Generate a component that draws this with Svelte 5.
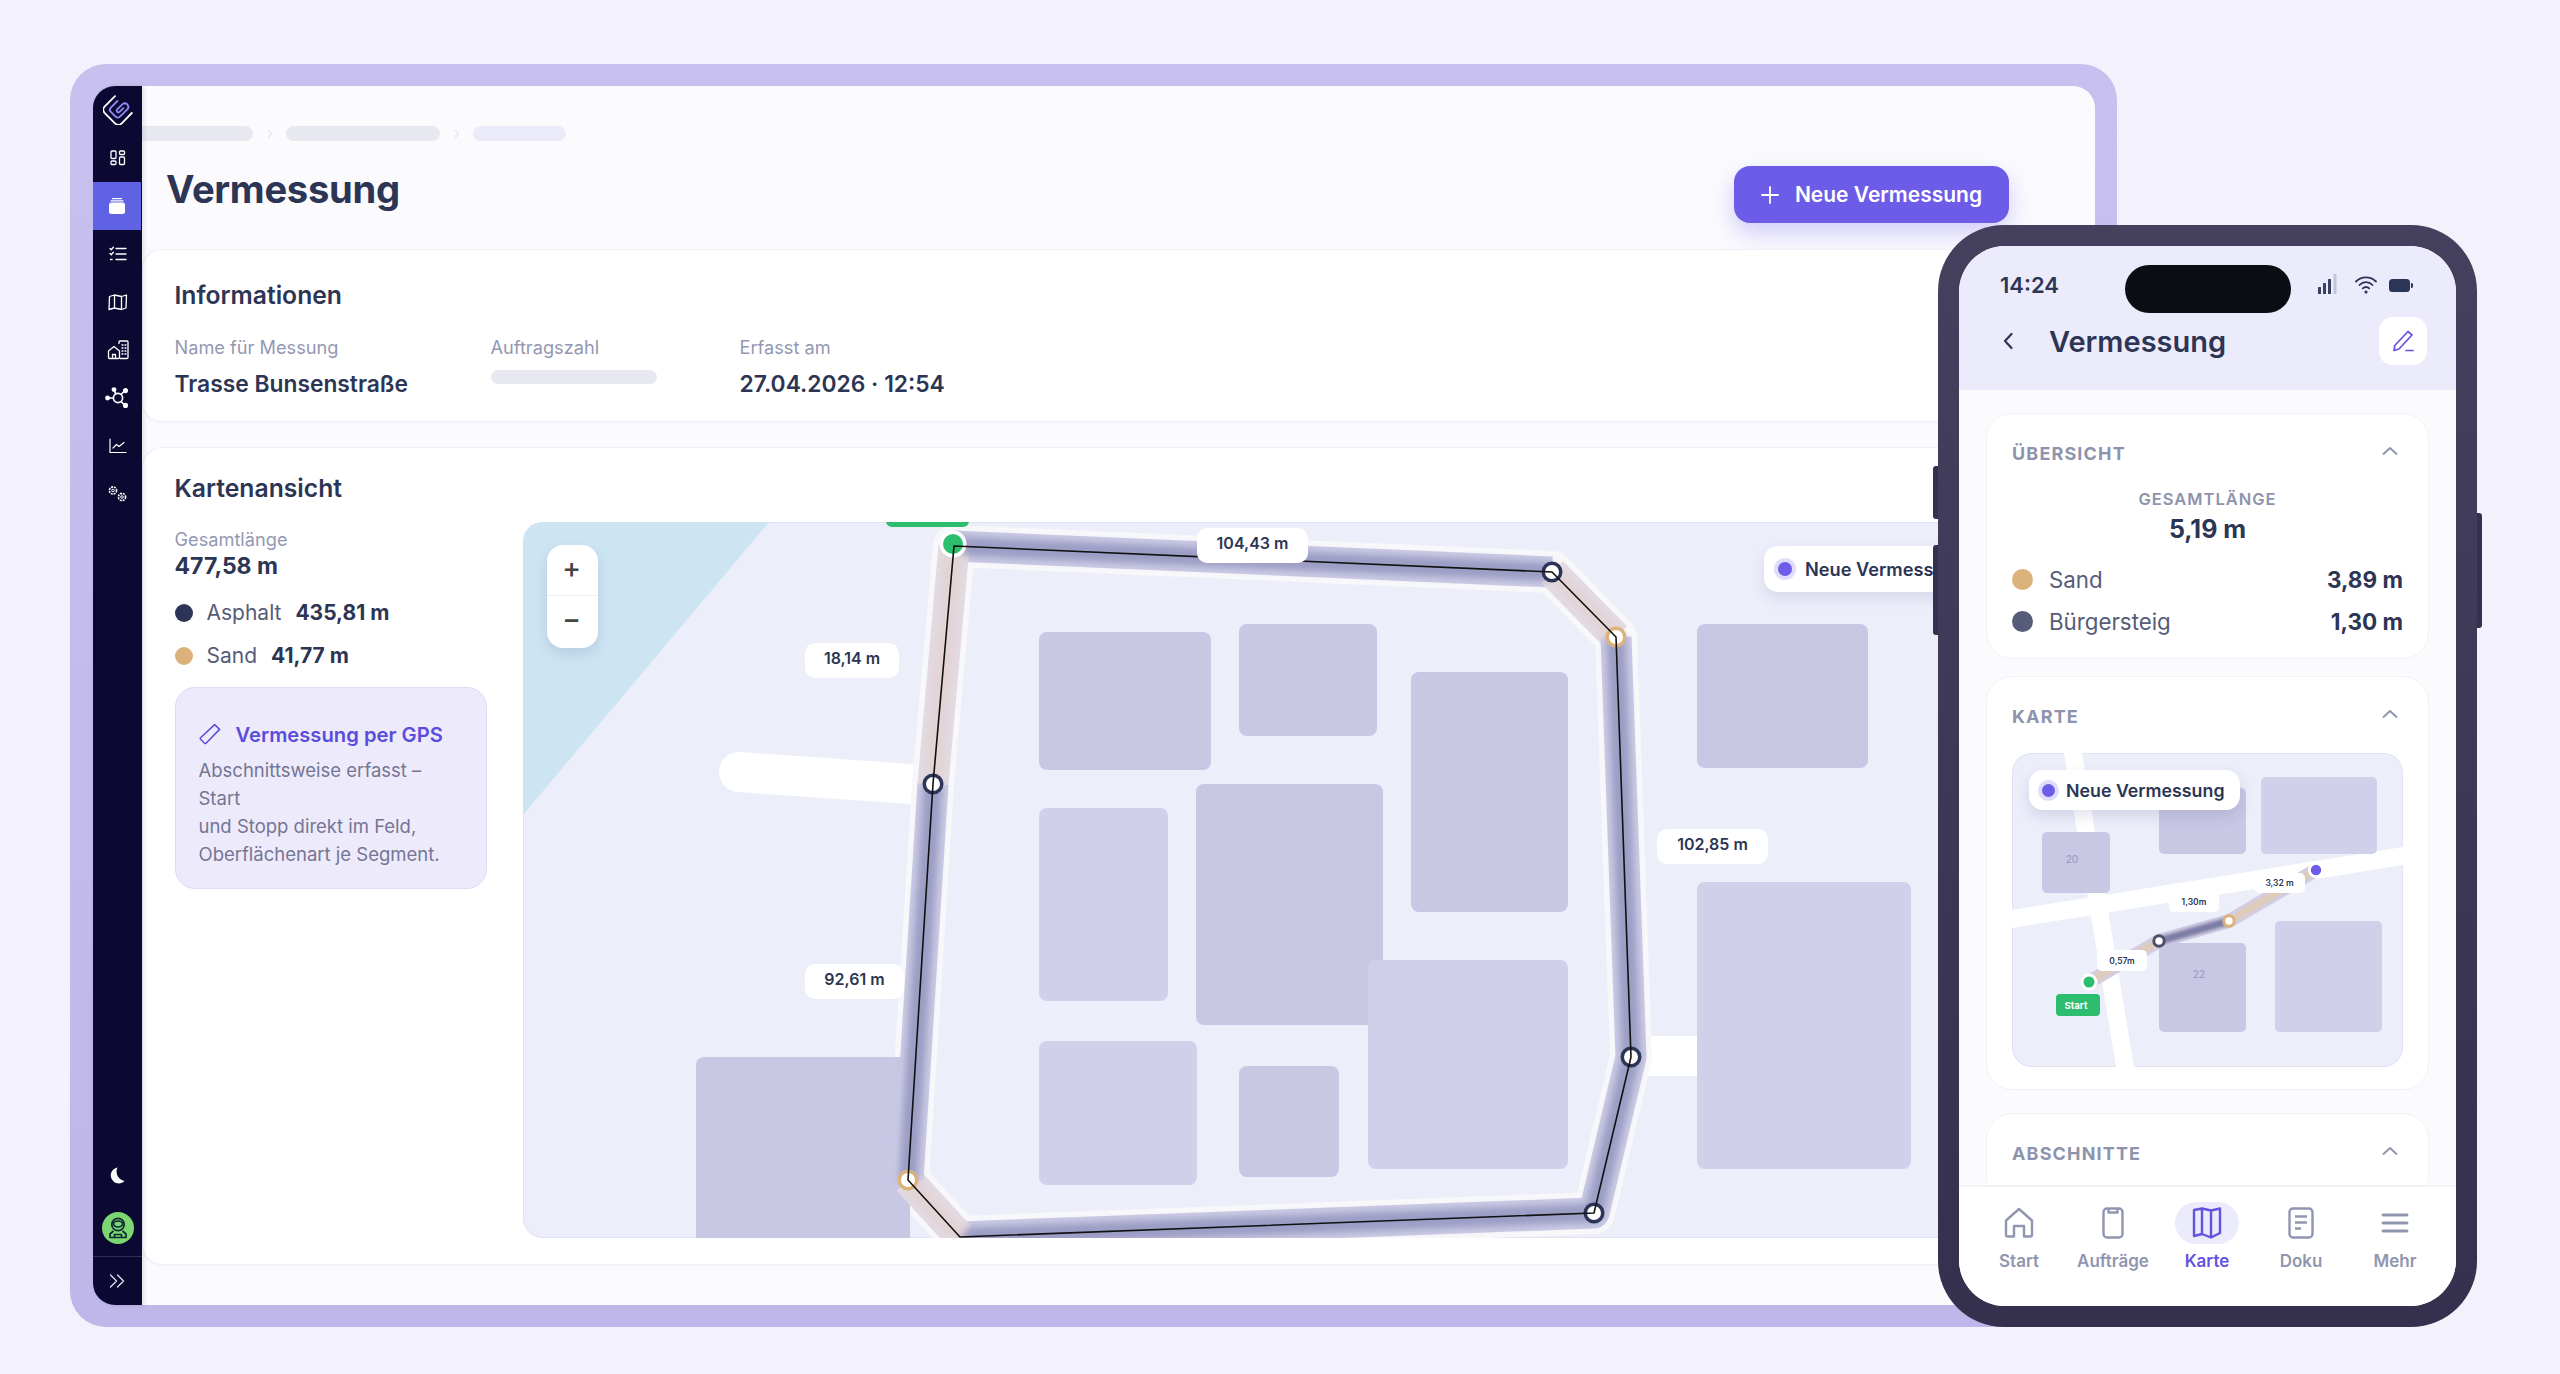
<script>
  const buildings = [
    { x: 1039, y: 632, w: 172, h: 138, c: 'a' },
    { x: 1239, y: 624, w: 138, h: 112, c: 'a' },
    { x: 1411, y: 672, w: 157, h: 240, c: 'a' },
    { x: 1697, y: 624, w: 171, h: 144, c: 'a' },
    { x: 1039, y: 808, w: 129, h: 193, c: 'b' },
    { x: 1196, y: 784, w: 187, h: 241, c: 'a' },
    { x: 1039, y: 1041, w: 158, h: 144, c: 'b' },
    { x: 1239, y: 1066, w: 100, h: 111, c: 'a' },
    { x: 1368, y: 960, w: 200, h: 209, c: 'b' },
    { x: 1697, y: 882, w: 214, h: 287, c: 'b' },
    { x: 696, y: 1057, w: 214, h: 200, c: 'a' }
  ];
  const route = [
    { d: 'M954 546 L1552 572', sand: false },
    { d: 'M1552 572 L1616 637', sand: true },
    { d: 'M1616 637 L1631 1057 L1594 1213 L960 1237', sand: false },
    { d: 'M960 1237 L908 1180', sand: true },
    { d: 'M908 1180 L933 784', sand: false },
    { d: 'M933 784 L954 546', sand: true }
  ];
  const outline = 'M954 546 L1552 572 L1616 637 L1631 1057 L1594 1213 L960 1237 L908 1180 L933 784 Z';
  const nodes = [
    { x: 933, y: 784, sand: false },
    { x: 1552, y: 572, sand: false },
    { x: 1616, y: 637, sand: true },
    { x: 1631, y: 1057, sand: false },
    { x: 1594, y: 1213, sand: false },
    { x: 908, y: 1180, sand: true }
  ];
  const chips = [
    { x: 1197, y: 528, w: 111, h: 35, t: '104,43 m' },
    { x: 805, y: 643, w: 94, h: 35, t: '18,14 m' },
    { x: 805, y: 964, w: 99, h: 35, t: '92,61 m' },
    { x: 1657, y: 829, w: 111, h: 35, t: '102,85 m' }
  ];
  const miniChips = [
    { x: 2097, y: 949, w: 50, h: 21, t: '0,57m' },
    { x: 2169, y: 891, w: 50, h: 20, t: '1,30m' },
    { x: 2254, y: 872, w: 51, h: 20, t: '3,32 m' }
  ];
</script>

<div class="frame">
  <aside class="rail">
    <div class="rail-item logo">
      <svg width="30" height="30" viewBox="1 2 25 25" fill="none" stroke-linecap="round" stroke-linejoin="round">
        <path d="M11 2 L2.5 10.5 a4 4 0 0 0 0 5.6 L11 24.6 a4 4 0 0 0 5.6 0 L25 16" stroke="#fff" stroke-width="1.5" transform="translate(0 1)" />
        <path d="M13 7 L7.5 12.5 a2.6 2.6 0 0 0 0 3.6 L11.5 20 a2.6 2.6 0 0 0 3.6 0 L21.5 13.8 a3 3 0 0 0 -4.2 -4.2 L12.8 14 a1.4 1.4 0 0 0 2 2 L18 13" stroke="#8f8cf5" stroke-width="1.5" />
      </svg>
    </div>
    <div class="rail-item">
      <svg width="16" height="16" viewBox="0 0 16 16" fill="none" stroke="#fff" stroke-width="1.3"><rect x="1" y="1" width="5" height="7.5" rx="1"/><rect x="9.5" y="1" width="5" height="3.5" rx="1"/><rect x="1" y="11" width="5" height="3.5" rx="1"/><rect x="9.5" y="7" width="5" height="7.5" rx="1"/></svg>
    </div>
    <div class="rail-item active">
      <svg width="18" height="18" viewBox="0 0 18 18" fill="#fff"><rect x="1" y="5.5" width="16" height="11.5" rx="2.5"/><rect x="2.5" y="3.2" width="13" height="1.3" rx=".6"/><rect x="4" y="1" width="10" height="1.3" rx=".6"/></svg>
    </div>
    <div class="rail-item">
      <svg width="18" height="16" viewBox="0 0 18 16" fill="none" stroke="#fff" stroke-width="1.3" stroke-linecap="round"><path d="M1 2.5 l1.2 1.2 L4.4 1.2 M1 7.5 l1.2 1.2 L4.4 6.2"/><path d="M7 2.5h10M7 8h10M7 13.5h10M1.5 13.5h1.6"/></svg>
    </div>
    <div class="rail-item">
      <svg width="20" height="18" viewBox="0 0 20 18" fill="none" stroke="#fff" stroke-width="1.3" stroke-linejoin="round"><path d="M1.5 3.5 L6.5 2 L13.5 3.5 L18.5 2 L18 15 L13.5 16.5 L6.5 15 L1 16.5 Z M6.5 2V15 M13.5 3.5V16.5"/></svg>
    </div>
    <div class="rail-item">
      <svg width="22" height="20" viewBox="0 0 22 20" fill="none" stroke="#fff" stroke-width="1.3" stroke-linejoin="round"><path d="M12 4 V2 a1 1 0 0 1 1 -1 h7 a1 1 0 0 1 1 1 V17.5 a1 1 0 0 1 -1 1 H13"/><path d="M1.5 11 L7 6.5 L12.5 11 V17.5 a1 1 0 0 1 -1 1 H2.5 a1 1 0 0 1 -1 -1 Z M5.5 18.5 V14.5 H8.5 V18.5"/><path d="M15 5h1M18 5h1M15 8h1M18 8h1M15 11h1M18 11h1M15 14h1M18 14h1" stroke-linecap="round"/></svg>
    </div>
    <div class="rail-item">
      <svg width="26" height="22" viewBox="0 0 26 22" fill="none" stroke="#fff" stroke-width="1.7"><circle cx="13" cy="11" r="4.6"/><path d="M9 11H4M16 7.5l3-3M16 14.5l3 3M11 7l-1.6-3"/><circle cx="2.6" cy="11" r="1.6" fill="#fff"/><circle cx="20.5" cy="3.6" r="1.7" fill="#fff"/><circle cx="20.5" cy="18.4" r="1.7" fill="#fff"/><circle cx="9" cy="2.6" r="1.6" fill="#fff"/></svg>
    </div>
    <div class="rail-item">
      <svg width="18" height="16" viewBox="0 0 18 16" fill="none" stroke="#fff" stroke-width="1.2" stroke-linejoin="round" stroke-linecap="round"><path d="M1 1V14.5H17"/><path d="M4 10 L7.5 6.5 L10 8.5 L15 4.5"/></svg>
    </div>
    <div class="rail-item">
      <svg width="21" height="18" viewBox="0 0 21 18" fill="none" stroke="#fff"><circle cx="6" cy="5.5" r="3.6" stroke-width="1.6" stroke-dasharray="2 .9"/><circle cx="6" cy="5.5" r="1.3" stroke-width="1"/><circle cx="15" cy="12" r="3.6" stroke-width="1.6" stroke-dasharray="2 .9"/><circle cx="15" cy="12" r="1.3" stroke-width="1"/></svg>
    </div>
    <div class="rail-spacer"></div>
    <div class="rail-item moon">
      <svg width="16" height="17" viewBox="0 0 16 17" fill="#fff"><path d="M8.5 .5 A8 8 0 1 0 15.5 14 A9.5 9.5 0 0 1 8.5 .5 Z"/></svg>
    </div>
    <div class="rail-item avatar-slot">
      <div class="avatar">
        <svg width="22" height="24" viewBox="0 0 22 24" fill="none" stroke="#0c2a33" stroke-width="1.7" stroke-linejoin="round"><circle cx="11" cy="8.5" r="6.2"/><path d="M6.5 8 a4.5 3 0 0 1 9 0 a4.5 3 0 0 1 -9 0Z"/><path d="M6.5 15 L3 18 V21.5 H19 V18 L15.5 15"/><path d="M7.5 21.5 V18.5 H14.5 V21.5"/></svg>
      </div>
    </div>
    <div class="rail-foot">
      <svg width="16" height="14" viewBox="0 0 16 14" fill="none" stroke="#dcdcec" stroke-width="1.4" stroke-linecap="round" stroke-linejoin="round"><path d="M1.5 1 L7.5 7 L1.5 13M8.5 1 L14.5 7 L8.5 13"/></svg>
    </div>
  </aside>

  <main class="main">
    <div class="crumbs">
      <span class="crumb c1"></span>
      <svg class="sep" width="6" height="10" viewBox="0 0 6 10" fill="none" stroke="#d6d8e4" stroke-width="1"><path d="M1 1l3.5 4L1 9"/></svg>
      <span class="crumb c2"></span>
      <svg class="sep" width="6" height="10" viewBox="0 0 6 10" fill="none" stroke="#d6d8e4" stroke-width="1"><path d="M1 1l3.5 4L1 9"/></svg>
      <span class="crumb c3"></span>
    </div>
    <header class="head">
      <h1>Vermessung</h1>
      <button class="primary">
        <svg width="18" height="18" viewBox="0 0 18 18" fill="none" stroke="#fff" stroke-width="1.8" stroke-linecap="round"><path d="M9 1v16M1 9h16"/></svg>
        Neue Vermessung
      </button>
    </header>

    <section class="card info">
      <h2>Informationen</h2>
      <div class="fields">
        <div>
          <div class="label">Name für Messung</div>
          <div class="value">Trasse Bunsenstraße</div>
        </div>
        <div>
          <div class="label">Auftragszahl</div>
          <div class="value"><span class="ghost"></span></div>
        </div>
        <div>
          <div class="label">Erfasst am</div>
          <div class="value">27.04.2026 · 12:54</div>
        </div>
      </div>
    </section>

    <section class="card kart">
      <h2>Kartenansicht</h2>
      <div class="kart-body">
        <div class="side">
          <div class="label">Gesamtlänge</div>
          <div class="total">477,58 m</div>
          <div class="legend first"><i class="dot asphalt"></i><span>Asphalt</span><b>435,81 m</b></div>
          <div class="legend"><i class="dot sand"></i><span>Sand</span><b>41,77 m</b></div>
          <div class="gps">
            <div class="gps-title">
              <svg width="22" height="22" viewBox="0 0 22 22" fill="none" stroke="#5b4ddb" stroke-width="1.5" stroke-linejoin="round"><path d="M15.6 1.6 L20.6 6.4 L7 20.2 a1 1 0 0 1 -1.4 0 L1.6 16.2 a1 1 0 0 1 0 -1.4 Z"/></svg>
              Vermessung per GPS
            </div>
            <p>Abschnittsweise erfasst –<br />Start<br />und Stopp direkt im Feld,<br />Oberflächenart je Segment.</p>
          </div>
        </div>

        <div class="map">
          <svg class="map-svg" width="1537" height="716" viewBox="523 522 1537 716">
            <defs>
              <filter id="soft" x="-20%" y="-20%" width="140%" height="140%"><feGaussianBlur stdDeviation="3.5" /></filter>
            </defs>
            <polygon points="523,522 769,522 523,815" class="water" />
            <path d="M739 772 L925 785" class="stub" />
            <rect x="1640" y="1036" width="60" height="40" fill="#fff" />
            <path d={outline} fill="none" stroke="#f8f8fb" stroke-width="42" stroke-linejoin="round" />
            {#each buildings as b}
              <rect x={b.x} y={b.y} width={b.w} height={b.h} rx="8" class={b.c === 'a' ? 'bld-a' : 'bld-b'} />
            {/each}
            {#each route as r}
              <path d={r.d} fill="none" stroke={r.sand ? '#e2dae4' : '#cbcbe5'} stroke-width="31" stroke-linejoin="round" />
            {/each}
            <g filter="url(#soft)">
              {#each route as r}
                <path d={r.d} fill="none" stroke={r.sand ? '#e3d4d6' : '#9c9dc5'} stroke-width="19" stroke-linejoin="round" />
              {/each}
            </g>
            <rect x="886" y="512" width="83" height="15" rx="6" fill="#2dbd6e" />
            <circle cx="953" cy="544" r="13.5" fill="#fff" />
            <circle cx="953" cy="544" r="10" fill="#2dbd6e" />
            {#each nodes as n}
              <circle cx={n.x} cy={n.y} r="8.75" fill="#fff" stroke={n.sand ? '#dcb27c' : '#2d3557'} stroke-width="3.5" />
            {/each}
            <path d={outline} fill="none" stroke="#111" stroke-width="1.6" stroke-linejoin="miter" />
            {#each chips as c}
              <rect x={c.x} y={c.y} width={c.w} height={c.h} rx="10" fill="#fff" />
              <text x={c.x + c.w / 2} y={c.y + c.h / 2 + 3.5} class="chip-text">{c.t}</text>
            {/each}
          </svg>
          <div class="zoom"><span>+</span><span>−</span></div>
          <div class="legend-chip"><i></i>Neue Vermessung</div>
        </div>
      </div>
    </section>
  </main>
</div>

<div class="phone">
  <span class="btn-l one"></span><span class="btn-l two"></span><span class="btn-r"></span>
  <div class="screen">
    <div class="p-head">
      <div class="status">
        <span class="time">14:24</span>
        <span class="island"></span>
        <span class="s-icons">
          <svg class="sig" width="19" height="20" viewBox="0 0 19 20" fill="#3a4160"><rect x="0" y="13" width="3" height="7" rx=".5"/><rect x="5" y="9" width="3" height="11" rx=".5"/><rect x="10" y="5" width="3" height="15" rx=".5"/><rect x="15.5" y="0" width="3" height="20" rx=".5" fill="#c4c5d8"/></svg>
          <svg width="22" height="18" viewBox="0 0 22 18" fill="none" stroke="#2d3557" stroke-width="1.8" stroke-linecap="round"><path d="M1 5.5 a14 14 0 0 1 20 0 M4.5 9 a9 9 0 0 1 13 0 M7.8 12.4 a4.4 4.4 0 0 1 6.4 0"/><circle cx="11" cy="16" r="1.6" fill="#2d3557" stroke="none"/></svg>
          <svg width="24" height="13" viewBox="0 0 24 13"><rect x="0" y="0" width="21" height="13" rx="3.5" fill="#2d3557"/><path d="M22 4v5a2.5 2.5 0 0 0 0-5Z" fill="#2d3557"/></svg>
        </span>
      </div>
      <div class="p-title">
        <svg width="12" height="18" viewBox="0 0 12 18" fill="none" stroke="#2d3557" stroke-width="2.2" stroke-linecap="round" stroke-linejoin="round"><path d="M9.5 2 L3 9 L9.5 16"/></svg>
        <span>Vermessung</span>
        <button class="edit" aria-label="Bearbeiten">
          <svg width="24" height="24" viewBox="0 0 24 24" fill="none" stroke="#6353e0" stroke-width="1.7" stroke-linecap="round" stroke-linejoin="round"><path d="M17 2.5 L21 6 L8 20 L3 21.5 L3.8 16.5 Z"/><path d="M15 21.5h7"/></svg>
        </button>
      </div>
    </div>
    <div class="p-scroll">
      <section class="p-card c-a">
        <div class="p-h"><span>ÜBERSICHT</span><svg width="16" height="10" viewBox="0 0 16 10" fill="none" stroke="#8e93ad" stroke-width="1.8" stroke-linecap="round" stroke-linejoin="round"><path d="M1.5 8 L8 2 L14.5 8"/></svg></div>
        <div class="p-sub">GESAMTLÄNGE</div>
        <div class="p-total">5,19 m</div>
        <div class="p-rows">
          <div class="p-row"><i class="p-dot sand"></i><span>Sand</span><b>3,89 m</b></div>
          <div class="p-row"><i class="p-dot walk"></i><span>Bürgersteig</span><b>1,30 m</b></div>
        </div>
      </section>
      <section class="p-card c-b">
        <div class="p-h"><span>KARTE</span><svg width="16" height="10" viewBox="0 0 16 10" fill="none" stroke="#8e93ad" stroke-width="1.8" stroke-linecap="round" stroke-linejoin="round"><path d="M1.5 8 L8 2 L14.5 8"/></svg></div>
        <div class="p-map">
          <svg width="391" height="314" viewBox="2012 752 391 314">
            <defs><filter id="mini" x="-20%" y="-60%" width="140%" height="220%"><feGaussianBlur stdDeviation="1.8" /></filter></defs>
            <polygon points="2064,752 2082,752 2134,1066 2116,1066" fill="#fff" />
            <polygon points="2012,909 2403,846 2403,864 2012,927" fill="#fff" />
            <rect x="2159" y="787" width="87" height="66" rx="5" class="bld-a" />
            <rect x="2261" y="776" width="116" height="77" rx="5" class="bld-b" />
            <rect x="2042" y="831" width="68" height="61" rx="5" class="bld-a" />
            <rect x="2159" y="942" width="87" height="89" rx="5" class="bld-a" />
            <rect x="2275" y="920" width="107" height="111" rx="5" class="bld-b" />
            <text x="2072" y="862" class="bld-num">20</text>
            <text x="2199" y="977" class="bld-num">22</text>
            <path d="M2089 981 L2159 940 L2229 920 L2316 869" fill="none" stroke="#d3cde4" stroke-width="14" stroke-linejoin="round" />
            <g filter="url(#mini)">
              <path d="M2089 981 L2159 940" fill="none" stroke="#dfcbb6" stroke-width="7" />
              <path d="M2159 940 L2229 920" fill="none" stroke="#7d7ea6" stroke-width="8" />
              <path d="M2229 920 L2316 869" fill="none" stroke="#dfcbb6" stroke-width="7" />
            </g>
            {#each miniChips as c}
              <rect x={c.x} y={c.y} width={c.w} height={c.h} rx="5" fill="#fff" />
              <text x={c.x + c.w / 2} y={c.y + c.h / 2 + 3} class="mini-text">{c.t}</text>
            {/each}
            <circle cx="2159" cy="940" r="5.2" fill="#fff" stroke="#4a4f6b" stroke-width="3" />
            <circle cx="2229" cy="920" r="5.2" fill="#fff" stroke="#dcb27c" stroke-width="3" />
            <circle cx="2089" cy="981" r="8.5" fill="#fff" />
            <circle cx="2089" cy="981" r="5.5" fill="#2dbd6e" />
            <circle cx="2316" cy="869" r="8" fill="#fff" />
            <circle cx="2316" cy="869" r="5.2" fill="#6c5ce7" />
            <rect x="2056" y="993" width="44" height="22" rx="4" fill="#2dbd6e" />
            <text x="2076" y="1008" class="start-text">Start</text>
          </svg>
          <div class="p-chip"><i></i>Neue Vermessung</div>
        </div>
      </section>
      <section class="p-card c-c">
        <div class="p-h"><span>ABSCHNITTE</span><svg width="16" height="10" viewBox="0 0 16 10" fill="none" stroke="#8e93ad" stroke-width="1.8" stroke-linecap="round" stroke-linejoin="round"><path d="M1.5 8 L8 2 L14.5 8"/></svg></div>
      </section>
    </div>
    <nav class="tabs">
      <div class="tab">
        <span class="t-icon"><svg width="30" height="32" viewBox="0 0 30 32" fill="none" stroke="#9096b0" stroke-width="2.4" stroke-linejoin="round"><path d="M15 2 L28 13.5 V28 a1.5 1.5 0 0 1 -1.5 1.5 H20 V19 H10 V29.5 H3.5 A1.5 1.5 0 0 1 2 28 V13.5 Z"/></svg></span>
        Start
      </div>
      <div class="tab">
        <span class="t-icon"><svg width="22" height="32" viewBox="0 0 22 32" fill="none" stroke="#9096b0" stroke-width="2.4" stroke-linejoin="round"><rect x="1.5" y="1.5" width="19" height="29" rx="3.5"/><path d="M6.5 1.5 V5.5 H15.5 V1.5"/></svg></span>
        Aufträge
      </div>
      <div class="tab on">
        <span class="t-icon"><svg width="30" height="32" viewBox="0 0 30 32" fill="none" stroke="#6353e0" stroke-width="2.4" stroke-linejoin="round"><path d="M2 3 L10 1.5 L19 3.5 L28 1.5 V26 L19 30.5 L10 27 L2 29 Z M10 1.5 V27 M19 3.5 V30.5"/></svg></span>
        Karte
      </div>
      <div class="tab">
        <span class="t-icon"><svg width="26" height="32" viewBox="0 0 26 32" fill="none" stroke="#9096b0" stroke-width="2.4" stroke-linejoin="round"><rect x="1.5" y="1.5" width="23" height="29" rx="3.5"/><path d="M7 9.5h12M7 15.5h12M7 21.5h6"/></svg></span>
        Doku
      </div>
      <div class="tab">
        <span class="t-icon"><svg width="28" height="22" viewBox="0 0 28 22" fill="none" stroke="#9096b0" stroke-width="2.8" stroke-linecap="round"><path d="M2 3h24M2 11h24M2 19h24"/></svg></span>
        Mehr
      </div>
    </nav>
  </div>
</div>

<style>
  :global(body) {
    margin: 0;
    background: #f3f2fc;
    font-family: Inter, "Noto Sans", sans-serif;
    color: #2c3554;
  }
  :global(#app) {
    position: relative;
    width: 2560px;
    height: 1374px;
    overflow: hidden;
  }
  .frame {
    position: absolute;
    left: 70px;
    top: 64px;
    width: 2047px;
    height: 1263px;
    box-sizing: border-box;
    padding: 22px 22px 22px 23px;
    border-radius: 36px;
    background: linear-gradient(180deg, #c8c0ee, #bfb6e9);
    display: flex;
  }
  .rail {
    width: 49px;
    flex: none;
    background: #0b0832;
    border-radius: 22px 0 0 22px;
    display: flex;
    flex-direction: column;
    align-items: stretch;
    box-shadow: 2px 0 4px rgba(30, 30, 60, .12);
    position: relative;
    z-index: 1;
  }
  .rail-item {
    height: 48px;
    display: flex;
    align-items: center;
    justify-content: center;
    flex: none;
  }
  .rail-item.active { background: #5f63e3; margin-right: 1px; }
  .rail-item.avatar-slot { height: 56px; }
  .rail-item.moon { padding: 0 2px 2px 0; box-sizing: border-box; }
  .rail-spacer { flex: 1; }
  .avatar {
    width: 32px;
    height: 32px;
    border-radius: 50%;
    background: #7cd773;
    display: flex;
    align-items: center;
    justify-content: center;
  }
  .rail-foot {
    height: 49px;
    border-top: 1px solid #2f2c56;
    display: flex;
    align-items: center;
    justify-content: center;
    box-sizing: border-box;
    padding-right: 1px;
  }
  .main {
    flex: 1;
    min-width: 0;
    background: #fbfbfe;
    border-radius: 0 22px 22px 0;
    overflow: hidden;
    display: flex;
    flex-direction: column;
  }
  .crumbs {
    display: flex;
    align-items: center;
    gap: 12px;
    margin-top: 40px;
    height: 15px;
  }
  .crumb { height: 15px; border-radius: 8px; background: #e8e9f0; display: block; }
  .c1 { width: 111px; border-radius: 0 8px 8px 0; }
  .c2 { width: 154px; margin-left: 1px; }
  .c3 { width: 93px; background: #ebeaf9; margin-left: 1px; }
  .sep { flex: none; margin-left: 2px; }
  .head {
    display: flex;
    align-items: flex-start;
    justify-content: space-between;
    height: 57px;
    margin-top: 25px;
    padding: 0 86px 0 24px;
  }
  h1 {
    margin: 0;
    font-size: 38.2px;
    line-height: 46px;
    font-weight: 700;
    letter-spacing: -.3px;
    color: #2c3554;
  }
  .primary {
    width: 275px;
    height: 57px;
    border: 0;
    border-radius: 16px;
    background: #6c5ce7;
    color: #fff;
    font: 600 21px Inter, sans-serif;
    display: flex;
    align-items: center;
    justify-content: center;
    gap: 16px;
    box-shadow: 0 10px 24px rgba(108, 92, 231, .3);
  }
  .card {
    background: #fff;
    border: 1px solid #efeff7;
    border-right: 0;
    border-radius: 20px;
    margin-right: 22px;
    box-sizing: border-box;
    padding-left: 31.5px;
    flex: none;
    box-shadow: 0 1px 3px rgba(40, 40, 90, .04);
  }
  .info { height: 173px; margin-top: 26px; padding-top: 30px; }
  .kart { height: 818px; margin-top: 25px; padding-top: 25px; }
  h2 {
    margin: 0;
    font-size: 24.7px;
    line-height: 30px;
    font-weight: 600;
    color: #2c3554;
  }
  .fields {
    display: grid;
    grid-template-columns: 316px 249px auto;
    margin-top: 26px;
  }
  .label {
    font-size: 18.2px;
    line-height: 22px;
    color: #9398b1;
  }
  .value {
    margin-top: 12px;
    font-size: 22.8px;
    line-height: 28px;
    font-weight: 600;
    color: #2c3554;
  }
  .ghost {
    display: block;
    width: 166px;
    height: 14px;
    border-radius: 7px;
    background: #e8e9f0;
  }
  .kart-body { display: flex; gap: 36px; margin-top: 19px; }
  .side { width: 312.5px; flex: none; padding-top: 6px; }
  .total {
    margin-top: 2px;
    font-size: 23px;
    line-height: 28px;
    font-weight: 700;
  }
  .legend {
    height: 43px;
    display: flex;
    align-items: center;
    font-size: 21px;
    color: #565c77;
  }
  .legend.first { margin-top: 11px; }
  .legend b { margin-left: 14px; font-weight: 700; font-size: 21px; color: #2c3554; }
  .dot {
    width: 18px;
    height: 18px;
    border-radius: 50%;
    margin-right: 14px;
    flex: none;
  }
  .dot.asphalt { background: #2d3557; }
  .dot.sand { background: #dcb27c; }
  .gps {
    margin-top: 10px;
    height: 202px;
    box-sizing: border-box;
    border: 1.5px solid #dedbf8;
    border-radius: 20px;
    background: #edebfb;
    padding: 32px 0 0 23px;
  }
  .gps-title {
    display: flex;
    align-items: center;
    gap: 15px;
    height: 28px;
    font-size: 20.2px;
    font-weight: 600;
    color: #5b4ddb;
  }
  .gps p {
    margin: 9px 0 0;
    font-size: 18.5px;
    line-height: 27.9px;
    color: #757595;
  }
  .map {
    position: relative;
    flex: none;
    width: 1537px;
    height: 716px;
    box-sizing: border-box;
    border-radius: 20px;
    overflow: hidden;
    background: #eceefa;
    box-shadow: inset 0 0 0 1px #e2e2f3;
  }
  .map-svg { display: block; }
  .water { fill: #cde5f3; }
  .stub { stroke: #fff; stroke-width: 40; stroke-linecap: round; fill: none; }
  .bld-a { fill: #c8c8e5; }
  .bld-b { fill: #d0d0eb; }
  .chip-text {
    font: 600 16px Inter, sans-serif;
    fill: #2c3554;
    text-anchor: middle;
  }
  .zoom {
    position: absolute;
    left: 24px;
    top: 23px;
    width: 51px;
    height: 103px;
    border-radius: 16px;
    background: #fff;
    box-shadow: 0 6px 14px rgba(60, 60, 110, .14);
    display: flex;
    flex-direction: column;
    font-size: 28px;
    font-weight: 500;
    color: #444;
  }
  .zoom span {
    height: 51px;
    box-sizing: border-box;
    padding: 0 2px 5px 0;
    display: flex;
    align-items: center;
    justify-content: center;
  }
  .zoom span:first-child { border-bottom: 1.5px solid #f0f0f4; }
  .legend-chip {
    position: absolute;
    left: 1241px;
    top: 24px;
    height: 46px;
    padding: 0 24px 0 41px;
    border-radius: 14px;
    background: #fff;
    box-shadow: 0 6px 14px rgba(60, 60, 110, .12);
    display: flex;
    align-items: center;
    font-size: 18.2px;
    font-weight: 600;
    white-space: nowrap;
  }
  .legend-chip i {
    position: absolute;
    left: 14px;
    top: 16px;
    width: 14px;
    height: 14px;
    border-radius: 50%;
    background: #6c5ce7;
    box-shadow: 0 0 0 4px #e0dcfb;
  }

  .phone {
    position: absolute;
    left: 1938px;
    top: 225px;
    width: 539px;
    height: 1102px;
    box-sizing: border-box;
    padding: 21px;
    border-radius: 66px;
    background: linear-gradient(180deg, #46405f, #34304e);
    z-index: 3;
  }
  .btn-l, .btn-r {
    position: absolute;
    width: 5px;
    background: #34304e;
  }
  .btn-l { left: -5px; border-radius: 3px 0 0 3px; }
  .btn-r { right: -5px; top: 288px; height: 115px; border-radius: 0 3px 3px 0; }
  .one { top: 241px; height: 53px; }
  .two { top: 320px; height: 90px; }
  .screen {
    height: 100%;
    border-radius: 46px;
    background: #fff;
    overflow: hidden;
    display: flex;
    flex-direction: column;
  }
  .p-head {
    height: 144px;
    flex: none;
    background: #ecebfb;
    box-sizing: border-box;
  }
  .status {
    position: relative;
    height: 71px;
    display: flex;
    align-items: center;
    padding: 7px 0 0 41px;
    box-sizing: border-box;
    justify-content: space-between;
  }
  .time { font-size: 22px; font-weight: 600; color: #2c3554; }
  .island {
    position: absolute;
    left: 166px;
    top: 19px;
    width: 166px;
    height: 48px;
    border-radius: 24px;
    background: #0c0c14;
  }
  .s-icons {
    display: flex;
    align-items: center;
    gap: 12px;
    padding: 0 43px 0 0;
  }
  .sig { margin: 0 6px 3px 0; }
  .p-title {
    display: flex;
    align-items: center;
    height: 48px;
    padding-left: 43px;
  }
  .p-title span {
    font-size: 29px;
    font-weight: 600;
    margin-left: 35px;
    color: #2c3554;
  }
  .edit {
    width: 48px;
    height: 48px;
    margin-left: auto;
    margin-right: 29px;
    border: 0;
    padding: 0;
    border-radius: 14px;
    background: #fff;
    display: flex;
    align-items: center;
    justify-content: center;
  }
  .p-scroll {
    flex: 1;
    min-height: 0;
    overflow: hidden;
    background: #fbfbfe;
    padding: 23px 27px 0;
    display: flex;
    flex-direction: column;
  }
  .p-card {
    flex: none;
    box-sizing: border-box;
    background: #fff;
    border: 1.5px solid #f1f1f8;
    border-radius: 26px;
    padding: 28.5px 25px 0;
  }
  .c-a { height: 246px; }
  .c-b { height: 414px; margin-top: 17px; }
  .c-c { height: 90px; margin-top: 23px; border-bottom: 0; }
  .p-h {
    height: 22px;
    display: flex;
    align-items: center;
    justify-content: space-between;
    font-size: 18px;
    font-weight: 700;
    letter-spacing: 1.15px;
    color: #8e93ad;
    padding-right: 5px;
  }
  .p-h svg { margin-top: -6px; }
  .p-sub {
    margin-top: 24px;
    text-align: center;
    font-size: 16.5px;
    line-height: 20px;
    font-weight: 600;
    letter-spacing: 1px;
    color: #8e93ad;
  }
  .p-total {
    margin-top: 5px;
    text-align: center;
    font-size: 25px;
    line-height: 30px;
    font-weight: 700;
  }
  .p-rows { margin-top: 15px; }
  .p-row {
    height: 42px;
    display: flex;
    align-items: center;
    font-size: 22.3px;
    color: #565c77;
  }
  .p-row b { margin-left: auto; font-weight: 700; font-size: 22.5px; color: #2c3554; }
  .p-dot {
    width: 21px;
    height: 21px;
    border-radius: 50%;
    margin-right: 16px;
    flex: none;
  }
  .p-dot.sand { background: #dcb27c; }
  .p-dot.walk { background: #565c77; }
  .p-map {
    position: relative;
    width: 391px;
    height: 314px;
    margin-top: 25px;
    border-radius: 20px;
    overflow: hidden;
    background: #eceefa;
    box-shadow: inset 0 0 0 1px #e2e2f3;
  }
  .p-map svg { display: block; }
  .bld-num {
    font: 500 10px Inter, sans-serif;
    fill: #9c9cc2;
    text-anchor: middle;
  }
  .mini-text {
    font: 600 8.5px Inter, sans-serif;
    fill: #2c3554;
    text-anchor: middle;
  }
  .start-text {
    font: 700 9.5px Inter, sans-serif;
    fill: #fff;
    text-anchor: middle;
  }
  .p-chip {
    position: absolute;
    left: 17px;
    top: 17px;
    width: 211px;
    height: 40px;
    box-sizing: border-box;
    padding: 1px 0 0 37px;
    border-radius: 14px;
    background: #fff;
    box-shadow: 0 6px 14px rgba(60, 60, 110, .14);
    display: flex;
    align-items: center;
    font-size: 17.8px;
    font-weight: 600;
    white-space: nowrap;
  }
  .p-chip i {
    position: absolute;
    left: 13px;
    top: 14px;
    width: 13px;
    height: 13px;
    border-radius: 50%;
    background: #6c5ce7;
    box-shadow: 0 0 0 4px #e0dcfb;
  }
  .tabs {
    flex: none;
    height: 121px;
    box-sizing: border-box;
    background: #fff;
    border-top: 2px solid #f1f1f8;
    display: grid;
    grid-template-columns: repeat(5, 94px);
    padding: 15px 0 0 13px;
  }
  .tab {
    display: flex;
    flex-direction: column;
    align-items: center;
    font-size: 17px;
    font-weight: 600;
    color: #9096b0;
  }
  .tab.on { color: #6353e0; }
  .t-icon {
    width: 64px;
    height: 42px;
    margin-bottom: 6.5px;
    border-radius: 21px;
    display: flex;
    align-items: center;
    justify-content: center;
  }
  .tab.on .t-icon { background: #ecebfb; }
</style>
